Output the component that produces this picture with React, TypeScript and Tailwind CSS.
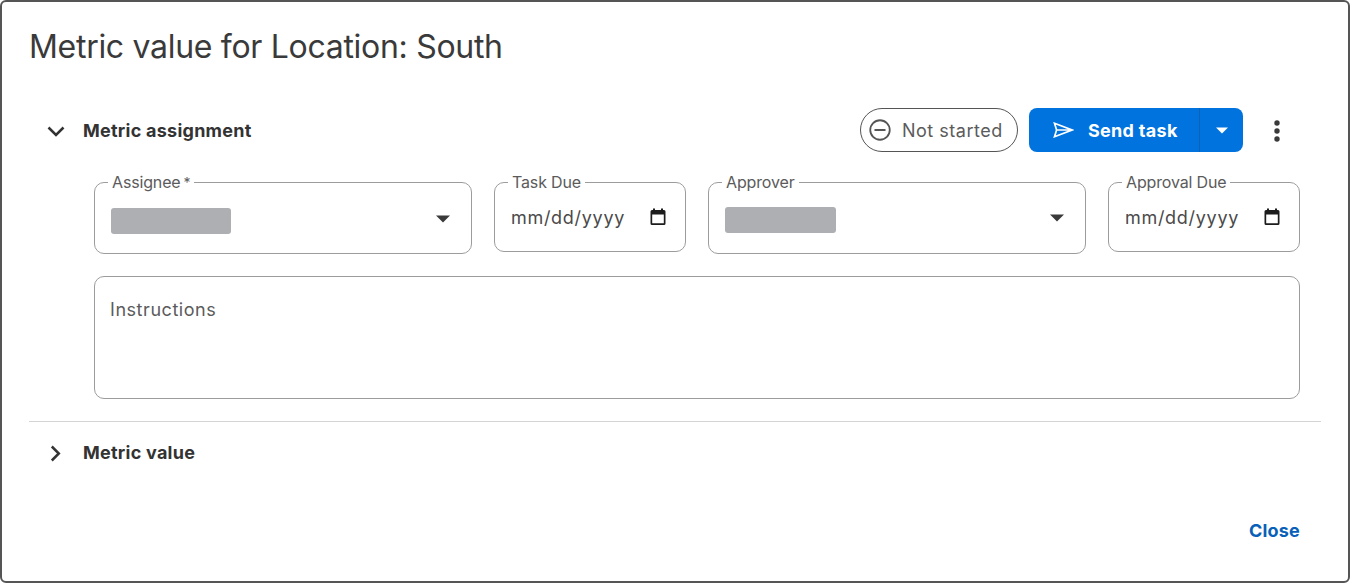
const Caret = ({ className = "" }: { className?: string }) => (
  <svg width="14" height="8" viewBox="0 0 14 8" className={className}>
    <path d="M0 0.5h14L7 7.5z" fill="currentColor" />
  </svg>
);

const Calendar = () => (
  <svg width="16" height="18" viewBox="0 0 16 18" className="shrink-0 text-[#1c1c1c]">
    <path d="M3 0.5h2V2h6V0.5h2V2h1a1.5 1.5 0 0 1 1.5 1.5v12A1.5 1.5 0 0 1 14 17H2a1.5 1.5 0 0 1-1.5-1.5v-12A1.5 1.5 0 0 1 2 2h1zM2.2 6.5v8.8h11.6V6.5z" fill="currentColor" />
  </svg>
);

function Field({ label, mark, className, children }: { label: string; mark?: boolean; className: string; children: React.ReactNode }) {
  return (
    <fieldset className={`border border-[#9c9c9c] rounded-[10px] px-[14px] ${className}`}>
      <legend className="-ml-[1px] px-[4px] text-[16px] leading-[18px] text-[#5b5b5b] tracking-[-0.15px]">
        {label}
        {mark && <span className="ml-[3px] text-[14px]">*</span>}
      </legend>
      {children}
    </fieldset>
  );
}

function SelectField({ label, mark, blur }: { label: string; mark?: boolean; blur: string }) {
  return (
    <Field label={label} mark={mark} className="w-[378px] h-[81px]">
      <div className="flex items-center justify-between h-[52px] pr-[7px]">
        <div className={`h-[26px] mt-[5px] rounded-[3px] bg-[#adafb2] ml-[2px] ${blur}`} />
        <Caret className="text-[#3a3a3a] mt-[1px]" />
      </div>
    </Field>
  );
}

function DateField({ label }: { label: string }) {
  return (
    <Field label={label} className="w-[192px] h-[79px] pr-[19px]">
      <div className="flex items-center justify-between h-[52px]">
        <span className="ml-[2px] text-[18px] text-[#4a4a4a] tracking-[0.7px]">mm/dd/yyyy</span>
        <Calendar />
      </div>
    </Field>
  );
}

export default function App() {
  return (
    <div className="w-[1350px] h-[583px] bg-white border-2 border-[#555555] rounded-[6px] flex flex-col font-['Inter','Liberation_Sans',sans-serif] text-[#333333] overflow-hidden">
      <h1 className="pl-[27px] pt-[24px] text-[32px] leading-[42px] font-normal text-[#3a3a3a] tracking-[-0.3px]">
        Metric value for Location: South
      </h1>

      <div className="mt-[40px] h-[44px] pl-[45px] pr-[68px] flex items-center">
        <svg width="18" height="11" viewBox="0 0 18 11" className="text-[#333333] mt-[3px]">
          <path d="M1.5 1.5L9 9l7.5-7.5" fill="none" stroke="currentColor" strokeWidth="2.5" />
        </svg>
        <span className="ml-[18px] mt-[1px] text-[18px] font-bold text-[#333333] tracking-[0.25px]">Metric assignment</span>
        <div className="ml-auto flex items-center">
          <div className="h-[44px] w-[158px] border border-[#555555] rounded-full flex items-center pl-[8px] bg-white">
            <svg width="22" height="22" viewBox="0 0 22 22" className="text-[#555555]">
              <circle cx="11" cy="11" r="9.75" fill="none" stroke="currentColor" strokeWidth="1.8" />
              <path d="M5.5 11h11" stroke="currentColor" strokeWidth="1.8" />
            </svg>
            <span className="ml-[11px] mt-[1px] text-[18px] text-[#5b5b5b] tracking-[0.5px]">Not started</span>
          </div>
          <div className="ml-[11px] h-[44px] w-[214px] rounded-[8px] bg-[#0073de] text-white flex items-center">
            <div className="flex-1 h-full flex items-center pl-[24px] border-r border-[#0a62b5]">
              <svg width="21" height="16" viewBox="0 0 21 16">
                <path d="M1.5 1.3L19 8 1.5 14.7 3.6 8zM3.6 8H19" fill="none" stroke="currentColor" strokeWidth="1.7" strokeLinejoin="miter" />
              </svg>
              <span className="ml-[14px] mt-[1px] text-[18px] font-bold tracking-[0.3px]">Send task</span>
            </div>
            <div className="w-[43px] flex justify-center">
              <Caret className="w-[12px] h-[7px]" />
            </div>
          </div>
          <svg width="6" height="24" viewBox="0 0 6 24" className="ml-[31px] mt-[1px] text-[#3a3a3a]">
            <circle cx="3" cy="4" r="2.7" fill="currentColor" />
            <circle cx="3" cy="12" r="2.7" fill="currentColor" />
            <circle cx="3" cy="20" r="2.7" fill="currentColor" />
          </svg>
        </div>
      </div>

      <div className="mt-[21px] pl-[92px] pr-[48px] flex justify-between items-start">
        <SelectField label="Assignee" mark blur="w-[120px]" />
        <DateField label="Task Due" />
        <SelectField label="Approver" blur="w-[111px]" />
        <DateField label="Approval Due" />
      </div>

      <div className="mt-[22px] ml-[92px] mr-[48px] h-[123px] border border-[#9c9c9c] rounded-[10px] px-[15px] pt-[21px] text-[18px] leading-[24px] text-[#5b5b5b] tracking-[0.55px]">
        Instructions
      </div>

      <div className="mt-[22px] ml-[27px] mr-[27px] border-t border-[#d4d4d4]" />

      <div className="mt-[16px] pl-[48px] flex items-center h-[28px]">
        <svg width="11" height="17" viewBox="0 0 11 17" className="text-[#333333] mt-[3px]">
          <path d="M1.8 1.5L8.8 8.5l-7 7" fill="none" stroke="currentColor" strokeWidth="2.5" />
        </svg>
        <span className="ml-[22px] text-[18px] font-bold text-[#333333] tracking-[0.25px]">Metric value</span>
      </div>

      <div className="mt-auto mb-[38px] pr-[48px] flex justify-end">
        <span className="text-[18px] leading-[24px] font-bold text-[#0860b8] tracking-[0.2px]">Close</span>
      </div>
    </div>
  );
}
